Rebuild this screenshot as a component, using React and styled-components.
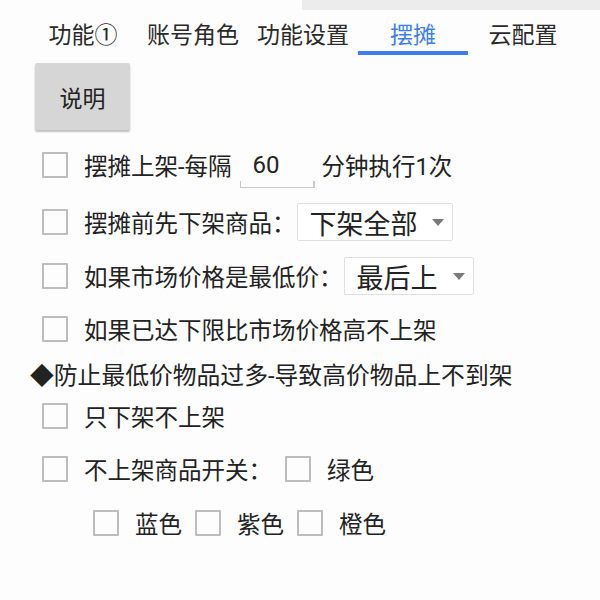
import styled, { createGlobalStyle } from "styled-components";

const GlobalStyle = createGlobalStyle`
  body {
    margin: 0;
    background: #fdfdfd;
    font-family: Roboto, "Noto Sans CJK SC", sans-serif;
    color: #222;
  }
`;

const Page = styled.div`
  width: 600px;
  height: 600px;
  overflow: hidden;
  display: flex;
  flex-direction: column;
`;

const TopStrip = styled.div`
  height: 10px;
  margin-left: 302px;
  background: #ececec;
`;

const TabBar = styled.div`
  display: flex;
  padding-left: 28px;
  height: 45px;
`;

const Tab = styled.div`
  width: 110px;
  display: flex;
  justify-content: center;
  align-items: center;
  font-size: 23px;
  white-space: nowrap;
  color: ${(p) => (p.active ? "#3d7fe6" : "#2a2a2a")};
  border-bottom: 4px solid ${(p) => (p.active ? "#3d7fe6" : "transparent")};
  box-sizing: border-box;
  padding-top: 4px;
`;

const HelpButton = styled.button`
  margin: 8px 0 0 35px;
  width: 95px;
  height: 67px;
  border: none;
  border-radius: 2px;
  background: #d6d6d6;
  box-shadow: 0 2px 2px rgba(0, 0, 0, 0.25);
  font-family: inherit;
  font-size: 23px;
  color: #222;
`;

const Row = styled.div`
  display: flex;
  align-items: center;
  height: 40px;
  margin-top: ${(p) => p.mt}px;
  padding-left: ${(p) => p.indent ?? 42}px;
  font-size: 23.5px;
  white-space: nowrap;
`;

const Box = styled.span`
  width: 22px;
  height: 22px;
  border: 2px solid #bdbdbd;
  border-radius: 1px;
  flex: none;
  margin-right: ${(p) => p.gap ?? 16}px;
`;

const Label = styled.span`
  margin-right: ${(p) => p.gap ?? 0}px;
`;

const NumberField = styled.span`
  position: relative;
  width: 75px;
  height: 42px;
  margin: 4px 7px 0 8px;
  border-bottom: 1.5px solid #c9c9c9;
  box-sizing: border-box;
  display: flex;
  align-items: center;
  padding: 0 0 4px 13px;
  font-size: 24px;
  &::before,
  &::after {
    content: "";
    position: absolute;
    bottom: 0;
    width: 1.5px;
    height: 6px;
    background: #c9c9c9;
  }
  &::before { left: 0; }
  &::after { right: 0; }
`;

const Select = styled.span`
  display: flex;
  align-items: center;
  width: ${(p) => p.w}px;
  height: 38px;
  margin-left: ${(p) => p.ml}px;
  padding-left: 12px;
  box-sizing: border-box;
  border: 1px solid #e0e0e0;
  border-radius: 2px;
  background: #fff;
  font-size: 27px;
`;

const Caret = styled.span`
  margin-left: auto;
  margin-right: 8px;
  width: 0;
  height: 0;
  border-left: 6px solid transparent;
  border-right: 6px solid transparent;
  border-top: 7px solid #7a7a7a;
`;

const Note = styled.div`
  height: 40px;
  margin-top: ${(p) => p.mt}px;
  display: flex;
  align-items: center;
  padding-left: 30px;
  font-size: 23.8px;
  white-space: nowrap;
`;

export default function App() {
  const tabs = ["功能①", "账号角色", "功能设置", "摆摊", "云配置"];
  return (
    <Page>
      <GlobalStyle />
      <TopStrip />
      <TabBar>
        {tabs.map((t) => (
          <Tab key={t} active={t === "摆摊"}>
            {t}
          </Tab>
        ))}
      </TabBar>
      <div>
        <HelpButton>说明</HelpButton>
      </div>
      <Row mt={15}>
        <Box />
        <Label>摆摊上架-每隔</Label>
        <NumberField>60</NumberField>
        <Label>分钟执行1次</Label>
      </Row>
      <Row mt={17}>
        <Box />
        <Label>摆摊前先下架商品：</Label>
        <Select w={156} ml={1}>
          下架全部
          <Caret />
        </Select>
      </Row>
      <Row mt={14}>
        <Box />
        <Label>如果市场价格是最低价：</Label>
        <Select w={130} ml={1}>
          最后上
          <Caret />
        </Select>
      </Row>
      <Row mt={13}>
        <Box />
        <Label>如果已达下限比市场价格高不上架</Label>
      </Row>
      <Note mt={4}>◆防止最低价物品过多-导致高价物品上不到架</Note>
      <Row mt={3}>
        <Box />
        <Label>只下架不上架</Label>
      </Row>
      <Row mt={13}>
        <Box />
        <Label gap={13}>不上架商品开关：</Label>
        <Box />
        <Label>绿色</Label>
      </Row>
      <Row mt={14} indent={93}>
        <Box />
        <Label gap={13}>蓝色</Label>
        <Box />
        <Label gap={13}>紫色</Label>
        <Box />
        <Label>橙色</Label>
      </Row>
    </Page>
  );
}
